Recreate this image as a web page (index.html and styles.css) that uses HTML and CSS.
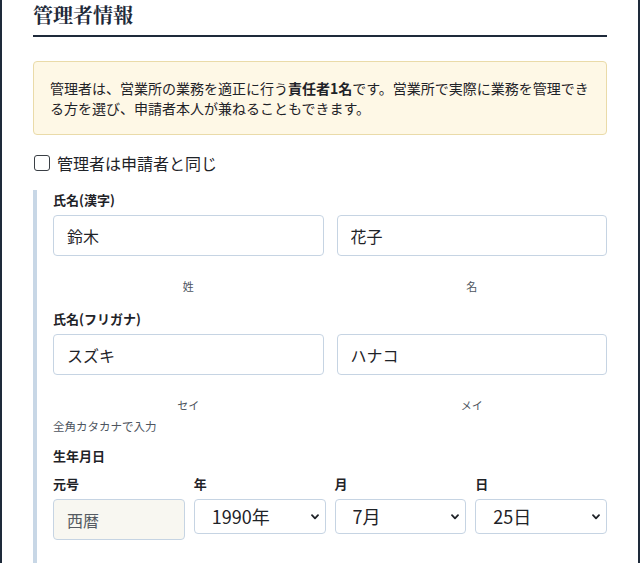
FILE: index.html
```html
<!DOCTYPE html>
<html lang="ja">

<head>
  <meta charset="UTF-8">
  <meta name="viewport" content="width=device-width, initial-scale=1.0">
  <title>管理者情報</title>
  <link rel="stylesheet" href="styles.css">
</head>

<body>
  <div id="container">
    <h2 class="section-title">管理者情報</h2>

    <div class="notice">
      管理者は、営業所の業務を適正に行う<strong>責任者1名</strong>です。営業所で実際に業務を管理できる方を選び、申請者本人が兼ねることもできます。
    </div>

    <label class="same-check">
      <input type="checkbox">
      <span>管理者は申請者と同じ</span>
    </label>

    <div class="manager-box">
      <div class="field">
        <div class="field-label">氏名(漢字)</div>
        <div class="pair">
          <div>
            <input type="text" class="text-input" value="鈴木">
            <div class="sub-label">姓</div>
          </div>
          <div>
            <input type="text" class="text-input" value="花子">
            <div class="sub-label">名</div>
          </div>
        </div>
      </div>

      <div class="field kana">
        <div class="field-label">氏名(フリガナ)</div>
        <div class="pair">
          <div>
            <input type="text" class="text-input" value="スズキ">
            <div class="sub-label">セイ</div>
          </div>
          <div>
            <input type="text" class="text-input" value="ハナコ">
            <div class="sub-label">メイ</div>
          </div>
        </div>
        <div class="hint">全角カタカナで入力</div>
      </div>

      <div class="field birth">
        <div class="field-label">生年月日</div>
        <div class="date-row">
          <div>
            <div class="col-label">元号</div>
            <input type="text" class="text-input" value="西暦" disabled>
          </div>
          <div>
            <div class="col-label">年</div>
            <select class="select-input">
              <option>1989年</option>
              <option selected>1990年</option>
              <option>1991年</option>
            </select>
          </div>
          <div>
            <div class="col-label">月</div>
            <select class="select-input">
              <option>6月</option>
              <option selected>7月</option>
              <option>8月</option>
            </select>
          </div>
          <div>
            <div class="col-label">日</div>
            <select class="select-input">
              <option>24日</option>
              <option selected>25日</option>
              <option>26日</option>
            </select>
          </div>
        </div>
      </div>
    </div>
  </div>
</body>

</html>
```

FILE: styles.css
```css
* {
  box-sizing: border-box;
}

body {
  margin: 0;
  font-family: "Noto Sans CJK JP", "Noto Sans", sans-serif;
  color: #1f2328;
  background: #fff;
}

#container {
  width: 640px;
  min-height: 563px;
  padding: 0 31px;
  border-left: 2px solid #1e2a3a;
  border-right: 2px solid #1e2a3a;
}

.section-title {
  margin: 0;
  padding: 1px 0 6px;
  font-family: "Noto Serif CJK JP", "Liberation Serif", serif;
  font-size: 20px;
  line-height: 28px;
  font-weight: bold;
  color: #1e2a3a;
  border-bottom: 2px solid #1e2a3a;
}

/* お知らせ */
.notice {
  margin-top: 24px;
  padding: 16px;
  font-size: 14px;
  line-height: 20px;
  background-color: #fef8e6;
  border: 1px solid #eadba9;
  border-radius: 4px;
}

.notice strong {
  font-weight: bold;
}

.same-check {
  display: flex;
  align-items: center;
  gap: 7px;
  margin-top: 16px;
  font-size: 16px;
  line-height: 24px;
  cursor: pointer;
}

.same-check input {
  appearance: none;
  width: 16px;
  height: 16px;
  margin: 0 0 0 1px;
  border: 1px solid #3a3f45;
  border-radius: 3px;
  background: #fff;
}

/* 管理者入力欄 */
.manager-box {
  margin-top: 15px;
  padding: 0 0 24px 16px;
  border-left: 4px solid #c8d7e6;
}

.field {
  margin-bottom: 15px;
}

.field.kana {
  margin-bottom: 11px;
}

.field-label {
  font-size: 13px;
  line-height: 20px;
  font-weight: bold;
  margin-bottom: 5px;
}

.pair {
  display: grid;
  grid-template-columns: 1fr 1fr;
  gap: 13px;
}

.text-input {
  display: block;
  width: 100%;
  height: 41px;
  padding: 8px 13px;
  font-family: inherit;
  font-size: 16px;
  line-height: 23px;
  color: #1f2328;
  background: #fff;
  border: 1px solid #c6d4e3;
  border-radius: 4px;
}

.text-input:disabled {
  background-color: #f8f7f1;
  color: #555b62;
}

.sub-label {
  margin-top: 22px;
  text-align: center;
  font-size: 11px;
  line-height: 16px;
  color: #4d5560;
}

.hint {
  margin-top: 4px;
  font-size: 11.5px;
  line-height: 18px;
  color: #4d5560;
}

.birth .field-label {
  margin-bottom: 0;
}

.date-row {
  display: grid;
  grid-template-columns: repeat(4, 1fr);
  gap: 9px;
  margin-top: 8px;
}

.col-label {
  font-size: 13px;
  line-height: 20px;
  font-weight: bold;
  margin-bottom: 5px;
}

.select-input {
  appearance: none;
  display: block;
  width: 100%;
  height: 35px;
  padding: 4px 24px 4px 17px;
  font-family: inherit;
  font-size: 18px;
  line-height: 25px;
  color: #1f2328;
  background: #fff url("data:image/svg+xml;utf8,<svg xmlns='http://www.w3.org/2000/svg' width='8' height='6' viewBox='0 0 8 6'><path d='M1 1.2 L4 4.4 L7 1.2' fill='none' stroke='%231f2328' stroke-width='1.8' stroke-linecap='round' stroke-linejoin='round'/></svg>") no-repeat right 6px center;
  border: 1px solid #c6d4e3;
  border-radius: 4px;
}
```
